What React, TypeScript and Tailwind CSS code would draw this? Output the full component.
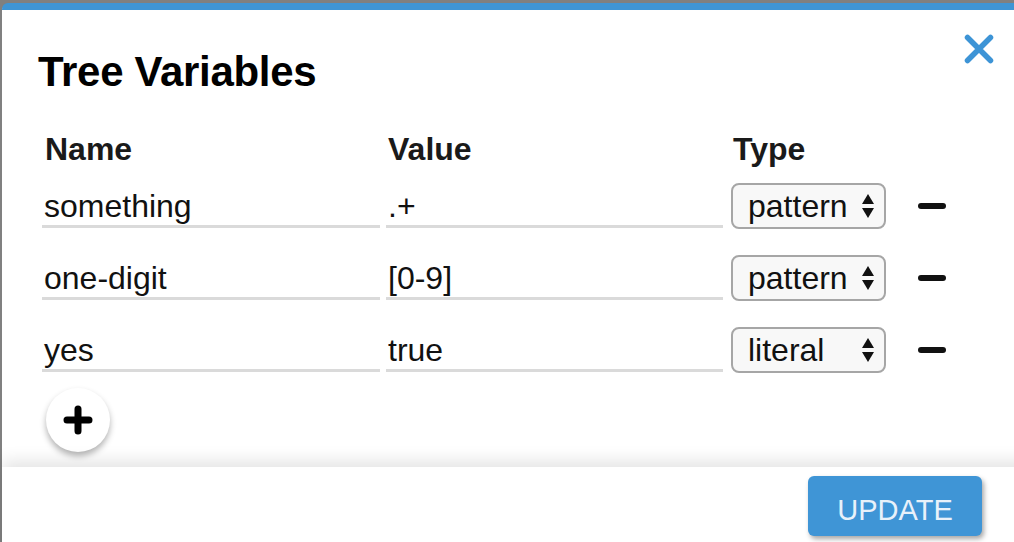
import React from "react";

interface Variable {
  name: string;
  value: string;
  type: string;
}

const rows: Variable[] = [
  { name: "something", value: ".+", type: "pattern" },
  { name: "one-digit", value: "[0-9]", type: "pattern" },
  { name: "yes", value: "true", type: "literal" },
];

function SelectArrows() {
  return (
    <svg width="14" height="26" viewBox="0 0 14 26" className="shrink-0">
      <path d="M7 1 L13 11 L1 11 Z" fill="#111" />
      <path d="M7 25 L13 15 L1 15 Z" fill="#111" />
    </svg>
  );
}

function Row({ v }: { v: Variable }) {
  return (
    <div className="flex items-center h-[45px]">
      <div className="w-[338px] h-[45px] border-b-[3px] border-[#dadada] flex items-center pl-[2px] pt-[4px] text-[32px] text-[#111]">
        {v.name}
      </div>
      <div className="ml-[6px] w-[337px] h-[45px] border-b-[3px] border-[#dadada] flex items-center pl-[2px] pt-[4px] text-[32px] text-[#111]">
        {v.value}
      </div>
      <div className="ml-[8px] w-[155px] h-[46px] rounded-[8px] border-2 border-[#a6a6a6] bg-[#f8f8f8] flex items-center justify-between pl-[15px] pr-[9px] text-[32px] text-[#111]">
        <span className="leading-none">{v.type}</span>
        <SelectArrows />
      </div>
      <div className="ml-[32px] w-[28px] h-[6px] rounded-full bg-[#111]" />
    </div>
  );
}

export default function App() {
  return (
    <div
      className="w-[1014px] h-[542px] overflow-hidden bg-[#808080] pt-[3px] pl-[2px]"
      style={{ fontFamily: '"Liberation Sans", Arial, sans-serif' }}
    >
      <div className="w-[1030px] h-[560px] bg-white rounded-tl-[6px] border-t-[7px] border-[#3f95d5] flex flex-col">
        {/* header */}
        <div className="h-[94px] shrink-0 relative pl-[36px] pt-[38px]">
          <h1 className="text-[42px] leading-[48px] font-bold text-black tracking-[-0.3px]">Tree Variables</h1>
          <button className="absolute left-[961px] top-[23px] w-[32px] h-[32px] flex items-center justify-center">
            <svg width="30" height="30" viewBox="0 0 30 30">
              <path
                d="M3.5 3.5 L26.5 26.5 M26.5 3.5 L3.5 26.5"
                stroke="#3d94d6"
                strokeWidth="5.5"
                strokeLinecap="round"
              />
            </svg>
          </button>
        </div>

        {/* body */}
        <div className="h-[363px] shrink-0 pl-[40px] pt-[27px]">
          <div className="flex h-[36px] text-[32px] leading-[36px] font-bold text-[#1a1a1a]">
            <div className="w-[338px] pl-[3px]">Name</div>
            <div className="ml-[6px] w-[337px] pl-[2px]">Value</div>
            <div className="ml-[8px] pl-[2px]">Type</div>
          </div>
          <div className="mt-[16px] flex flex-col gap-[27px]">
            {rows.map((v) => (
              <Row key={v.name} v={v} />
            ))}
          </div>
          <button className="mt-[16px] ml-[4px] w-[64px] h-[64px] rounded-full bg-white shadow-[0_4px_6px_rgba(0,0,0,0.3)] flex items-center justify-center">
            <svg width="30" height="30" viewBox="0 0 30 30">
              <path
                d="M15 4 L15 26 M4 15 L26 15"
                stroke="#000"
                strokeWidth="7"
                strokeLinecap="round"
              />
            </svg>
          </button>
        </div>

        {/* footer */}
        <div className="relative z-10 flex-1 bg-white shadow-[0_-6px_16px_rgba(0,0,0,0.11)] pt-[9px] pl-[806px]">
          <button className="w-[174px] h-[60px] rounded-[6px] bg-[#3f95d6] shadow-[2px_3px_5px_rgba(0,0,0,0.35)] pt-[10px] text-[29px] text-[#e8f1fa]">
            UPDATE
          </button>
        </div>
      </div>
    </div>
  );
}
